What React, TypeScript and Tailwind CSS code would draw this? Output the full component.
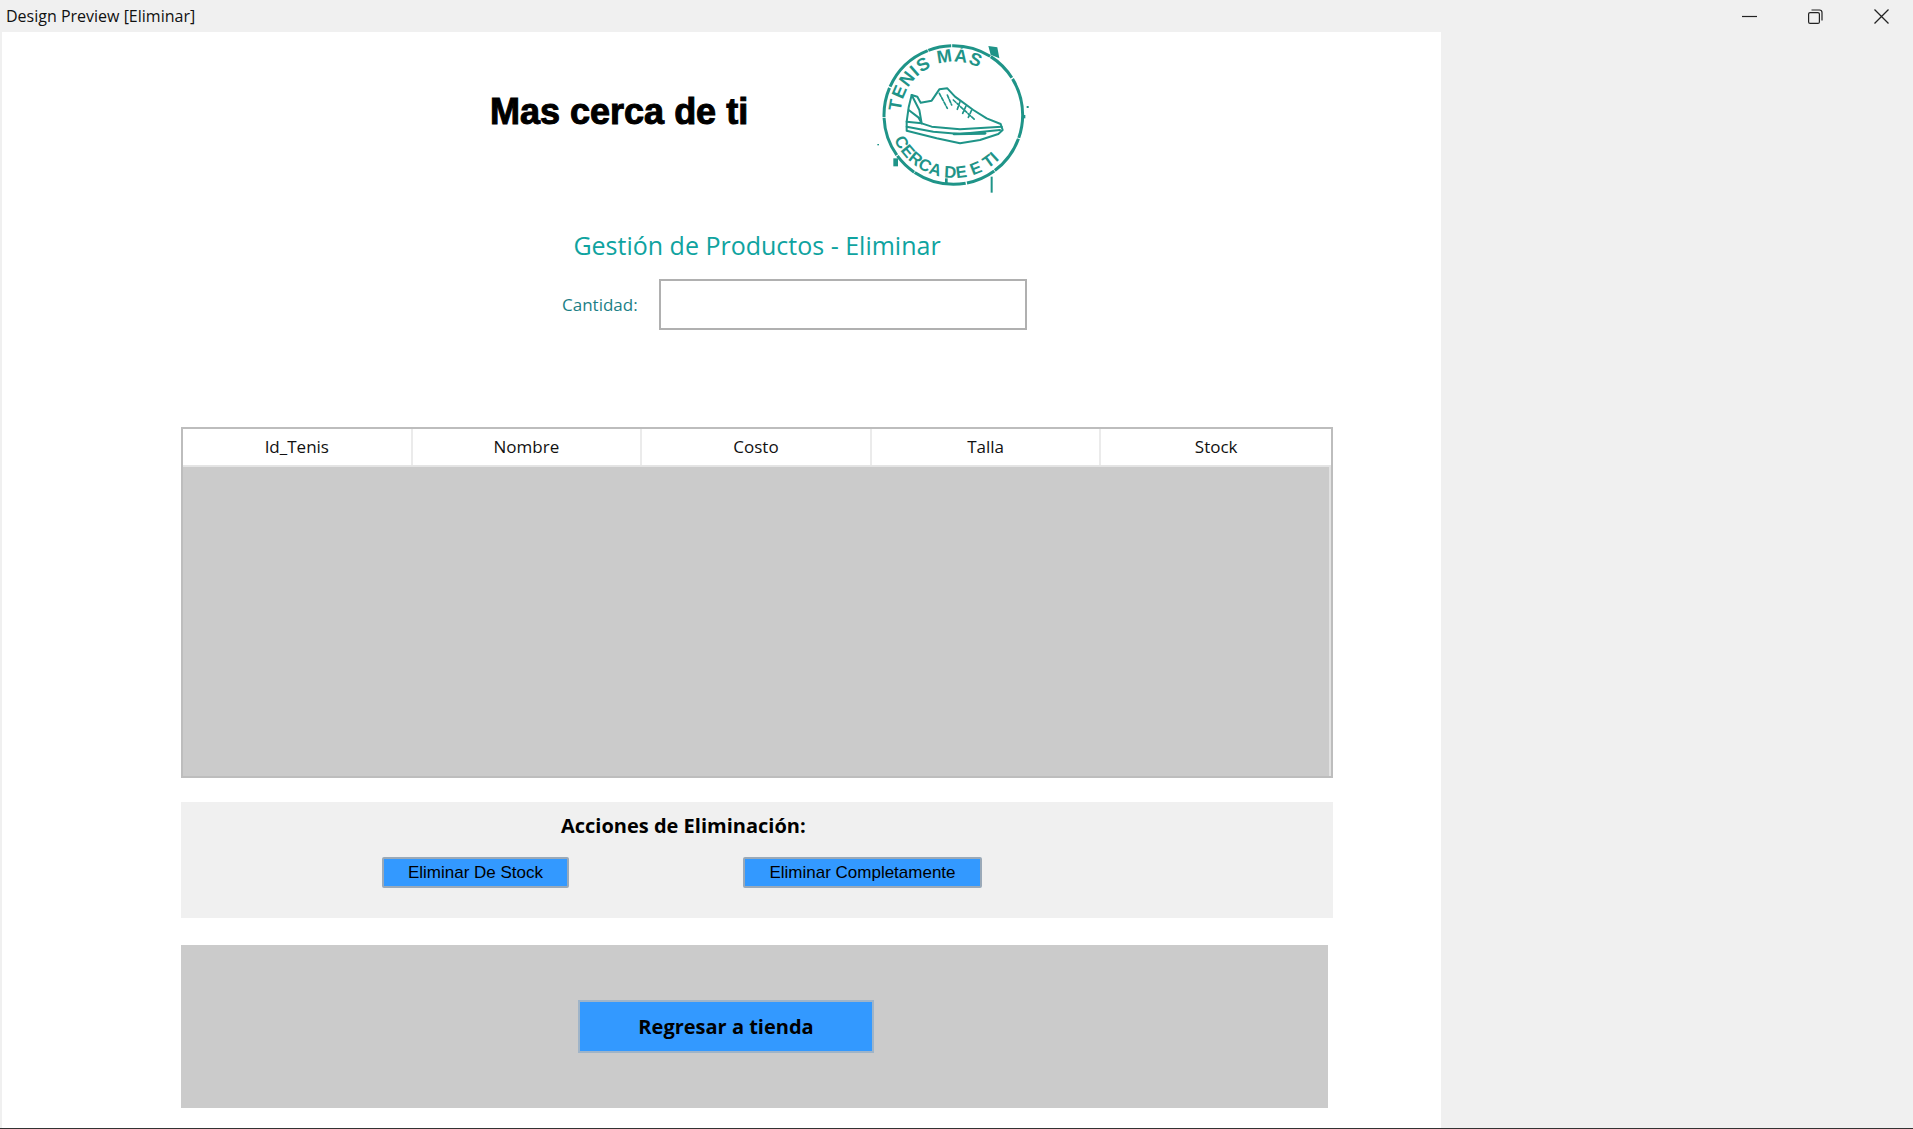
const SEGOE = "font-['Open_Sans','Noto_Sans',sans-serif]";

function Logo() {
  const c = "#1f9488";
  return (
    <svg width="180" height="168" viewBox="0 6 540 504" className="shrink-0">
      <defs>
        <path id="arcTop" d="M 122 255 A 160 160 0 0 1 442 255" />
        <path id="arcBottom" d="M 92 300 A 196 196 0 0 0 470 300" />
      </defs>
      <circle cx="280" cy="255" r="208" fill="none" stroke={c} strokeWidth="9" strokeDasharray="70 3 120 2 90 4 160 2" />
      <text fill={c} fontFamily="'Liberation Sans',sans-serif" fontWeight="700" fontSize="54" letterSpacing="3">
        <textPath href="#arcTop" startOffset="2%">TENIS MÁS</textPath>
      </text>
      <text fill={c} fontFamily="'Liberation Sans',sans-serif" fontWeight="700" fontSize="50" letterSpacing="1">
        <textPath href="#arcBottom" startOffset="6%">CERCA DE E TI</textPath>
      </text>
      <g fill="none" stroke={c} strokeWidth="6" strokeLinejoin="round" strokeLinecap="round">
        <path d="M140 275 L146 232 L155 195 L172 200 L182 218 L215 212 L238 178 L262 175 L285 200 L340 240 L380 265 L422 282 L428 300 L415 312 L360 330 L300 340 L230 325 L140 302 Z" />
        <path d="M140 275 L185 280 L215 290 L300 298 L425 290" />
        <path d="M146 240 L175 262 L185 280 L178 240 L155 195" />
        <path d="M140 290 L220 305 L300 312 L420 300" />
        <path d="M282 312 L375 310" strokeWidth="8" />
        <path d="M238 190 L262 235 M262 195 L275 225 M280 210 L345 270 M300 215 L292 238 M318 228 L308 250 M335 240 L325 262" strokeDasharray="10 5" strokeWidth="5" />
      </g>
      <g fill={c}>
        <path d="M385 48 L412 52 L418 85 L392 74 Z" />
        <rect x="392" y="440" width="6" height="48" />
        <rect x="100" y="385" width="14" height="24" />
        <rect x="500" y="228" width="6" height="6" />
        <rect x="490" y="255" width="6" height="10" />
        <rect x="52" y="342" width="5" height="4" />
        <rect x="255" y="445" width="8" height="14" />
      </g>
    </svg>
  );
}

export default function App() {
  return (
    <div className="w-[1913px] h-[1129px] bg-[#f0f0f0] flex flex-col overflow-hidden text-black">
      <div className="h-[32px] shrink-0 flex items-center justify-between">
        <span className={`${SEGOE} text-[16px] ml-[6px] text-[#111]`}>Design Preview [Eliminar]</span>
        <div className="flex items-center mr-[24px] gap-[51px]">
          <svg width="15" height="15" viewBox="0 0 15 15" fill="none" stroke="#222" strokeWidth="1.2">
            <path d="M0 7.5 H15" />
          </svg>
          <svg width="15" height="15" viewBox="0 0 15 15" fill="none" stroke="#222" strokeWidth="1.2">
            <rect x="0.6" y="3.6" width="10.8" height="10.8" rx="1.5" />
            <path d="M3.5 1 H11.5 Q14 1 14 3.5 V11.5" />
          </svg>
          <svg width="15" height="15" viewBox="0 0 15 15" fill="none" stroke="#222" strokeWidth="1.3">
            <path d="M0.5 0.5 L14.5 14.5 M14.5 0.5 L0.5 14.5" />
          </svg>
        </div>
      </div>
      <div className="h-[1096px] w-[1439px] ml-[2px] bg-white pl-[179px]">
        <div className="w-[1152px] flex flex-col">
          <div className="h-[168px] flex pl-[309px]">
            <h1 className="w-[370px] mt-[55px] font-['Liberation_Sans',sans-serif] font-bold text-[36px] leading-[50px] [-webkit-text-stroke:1px_black]">Mas cerca de ti</h1>
            <Logo />
          </div>
          <h2 className={`${SEGOE} mt-[28px] text-center text-[25px] leading-[34px] text-[#0fa3a0]`}>Gestión de Productos - Eliminar</h2>
          <div className="mt-[17px] h-[51px] flex items-center pl-[381px]">
            <label className={`${SEGOE} w-[97px] text-[17px] text-[#1b7f86]`}>Cantidad:</label>
            <div className="w-[368px] h-[51px] border-2 border-[#b0b0b0] bg-white" />
          </div>
          <div className="mt-[97px] w-[1152px] h-[351px] border-2 border-[#bdbdbd] flex flex-col bg-[#cbcbcb]">
            <div className={`${SEGOE} h-[38px] bg-white grid grid-cols-5 text-[17px] text-[#111] border-b-2 border-[#e4e4e4]`}>
              {["Id_Tenis", "Nombre", "Costo", "Talla", "Stock"].map((t, i) => (
                <div key={t} className={`flex items-center justify-center ${i < 4 ? "border-r-2 border-[#ebebeb]" : ""}`}>{t}</div>
              ))}
            </div>
            <div className="flex-1 border-r-2 border-[#e2e2e2]" />
          </div>
          <div className="mt-[24px] h-[116px] bg-[#f0f0f0] relative">
            <div className={`${SEGOE} ml-[380px] mt-0 pt-[9px] font-bold text-[20px] leading-[30px] w-fit`}>Acciones de Eliminación:</div>
            <div className="mt-[16px] flex pl-[201px]">
              <button className="w-[187px] h-[31px] bg-[#3399ff] border-2 border-[#9aa9b8] rounded-[2px] font-['Liberation_Sans',sans-serif] text-[17px] leading-none">Eliminar De Stock</button>
              <button className="ml-[174px] w-[239px] h-[31px] bg-[#3399ff] border-2 border-[#9aa9b8] rounded-[2px] font-['Liberation_Sans',sans-serif] text-[17px] leading-none">Eliminar Completamente</button>
            </div>
          </div>
          <div className="mt-[27px] w-[1147px] h-[163px] bg-[#cbcbcb] flex items-center pl-[397px]">
            <button className={`${SEGOE} w-[296px] h-[53px] bg-[#3399ff] border-2 border-[#9fb4c8] font-bold text-[20px]`}>Regresar a tienda</button>
          </div>
        </div>
      </div>
      <div className="h-[1px] bg-[#333] shrink-0" />
    </div>
  );
}
